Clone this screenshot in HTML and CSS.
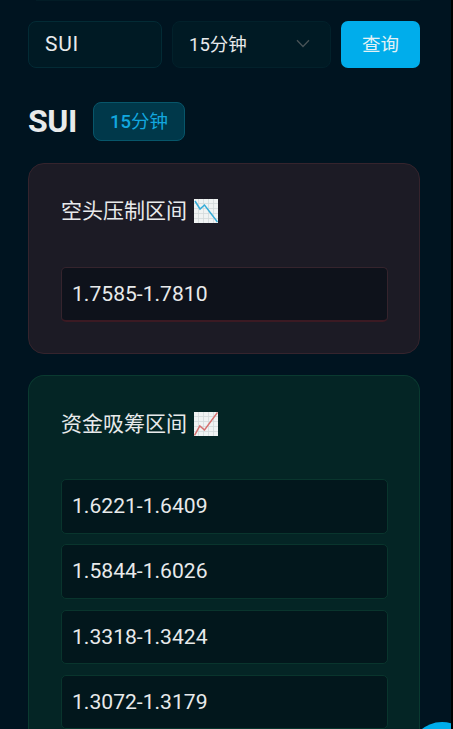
FILE: index.html
```
<!DOCTYPE html>
<html lang="zh-CN">
<head>
<meta charset="utf-8">
<title>SUI 15分钟</title>
<link rel="stylesheet" href="styles.css">
</head>
<body>
<main class="page">
  <form class="search">
    <div class="field symbol">SUI</div>
    <div class="field period"><span>15分钟</span>
      <svg class="chevron" viewBox="0 0 14 9"><path d="M1 1.2 7 7.5 13 1.2"/></svg>
    </div>
    <button class="query" type="button">查询</button>
  </form>
  <header class="heading">
    <h1>SUI</h1>
    <span class="badge"><b>15</b>分钟</span>
  </header>
  <section class="card short">
    <h2>空头压制区间
      <svg class="chart" viewBox="0 0 24 24"><rect class="paper" width="24" height="24"/><path class="grid" d="M4.5 0v24M9.5 0v24M14.5 0v24M19.5 0v24M0 4.5h24M0 9.5h24M0 14.5h24M0 19.5h24"/><path class="line" d="M1 2 6 10 10.5 6 23.5 23"/></svg>
    </h2>
    <ul><li>1.7585-1.7810</li></ul>
  </section>
  <section class="card long">
    <h2>资金吸筹区间
      <svg class="chart" viewBox="0 0 24 24"><rect class="paper" width="24" height="24"/><path class="grid" d="M4.5 0v24M9.5 0v24M14.5 0v24M19.5 0v24M0 4.5h24M0 9.5h24M0 14.5h24M0 19.5h24"/><path class="line" d="M.5 23.5 5.8 14 10.5 18 23.5 .5"/></svg>
    </h2>
    <ul>
      <li>1.6221-1.6409</li>
      <li>1.5844-1.6026</li>
      <li>1.3318-1.3424</li>
      <li>1.3072-1.3179</li>
    </ul>
  </section>
</main>
<div class="fab"></div>
</body>
</html>
```

FILE: styles.css
```
* {
  box-sizing: border-box;
}

html {
  background: #000;
}

body {
  position: relative;
  width: 451px;
  height: 729px;
  margin: 0;
  overflow: hidden;
  background: #001420;
  color: #e8eaeb;
  font-family: Roboto, "Noto Sans CJK SC", sans-serif;
}

.page {
  height: 729px;
  padding: 0 31px 0 28px;
  overflow: hidden;
}

.page::before {
  content: "";
  display: block;
  height: 1px;
  margin: 0 0 19.6px 8px;
  background: #021c26;
}

.search {
  display: flex;
  gap: 10px;
  height: 47.8px;
}

.field {
  display: flex;
  align-items: center;
  border: 1px solid #032b35;
  border-radius: 8px;
  background: #001a24;
}

.symbol {
  width: 134px;
  padding: 0 16px 1px;
  font-size: 21px;
  letter-spacing: .7px;
}

.period {
  justify-content: space-between;
  width: 159px;
  padding: 0 20px 2px 16px;
  border-color: #02212b;
  font-size: 18.5px;
}

.chevron {
  width: 14px;
  height: 9px;
  margin-top: 1px;
  fill: none;
  stroke: #485357;
  stroke-width: 1.3;
}

.query {
  width: 79px;
  padding: 0 0 2px;
  border: 0;
  border-radius: 7px;
  background: #00adeb;
  color: #e4f2f5;
  font: 18.5px Roboto, "Noto Sans CJK SC", sans-serif;
}

.heading {
  display: flex;
  align-items: center;
  gap: 16px;
  height: 39px;
  margin-top: 33.3px;
}

h1 {
  width: 49px;
  margin: 0;
  font-size: 32px;
  line-height: 39px;
  letter-spacing: -.4px;
}

.badge {
  width: 92px;
  height: 39px;
  border: 1px solid #07566a;
  border-radius: 8px;
  background: #00384a;
  color: #12a7df;
  font-size: 18.5px;
  line-height: 38px;
  text-align: center;
}

.badge b {
  font-weight: 500;
}

.card {
  height: 191px;
  margin-top: 22.3px;
  padding: 31px 31px 0 32px;
  border: 1px solid #35242d;
  border-radius: 16px;
  background: #1c1b25;
}

h2 {
  display: flex;
  align-items: center;
  gap: 7px;
  height: 32px;
  margin: 0 0 40px;
  font-size: 21px;
  font-weight: 400;
  line-height: 32px;
}

.chart {
  width: 24px;
  height: 24px;
}

.paper {
  fill: #f0f3f3;
}

.grid {
  fill: none;
  stroke: #d3d9da;
  stroke-width: .8;
}

.line {
  fill: none;
  stroke: #35acd8;
  stroke-width: 1.5;
}

ul {
  display: grid;
  gap: 10.6px;
  margin: 0;
  padding: 0;
  list-style: none;
}

li {
  height: 54.6px;
  padding: 0 10px;
  border: 1px solid #35242d;
  border-radius: 5px;
  background: #0e121b;
  font-size: 21.1px;
  line-height: 52px;
}

.short li {
  border-bottom: 2px solid #3b1a23;
}

.long {
  height: 354px;
  margin-top: 21.2px;
  padding-top: 31.8px;
  border-color: #0a3a30;
  border-bottom: 0;
  border-radius: 16px 16px 0 0;
  background: #042525;
}

.long h2 {
  margin-bottom: 39.2px;
}

.long li {
  border-color: #09352d;
  background: #02171c;
}

.long .line {
  stroke: #d6706f;
}

.fab {
  position: absolute;
  top: 722px;
  left: 410px;
  width: 64px;
  height: 64px;
  border-radius: 50%;
  background: #00adeb;
}
```
